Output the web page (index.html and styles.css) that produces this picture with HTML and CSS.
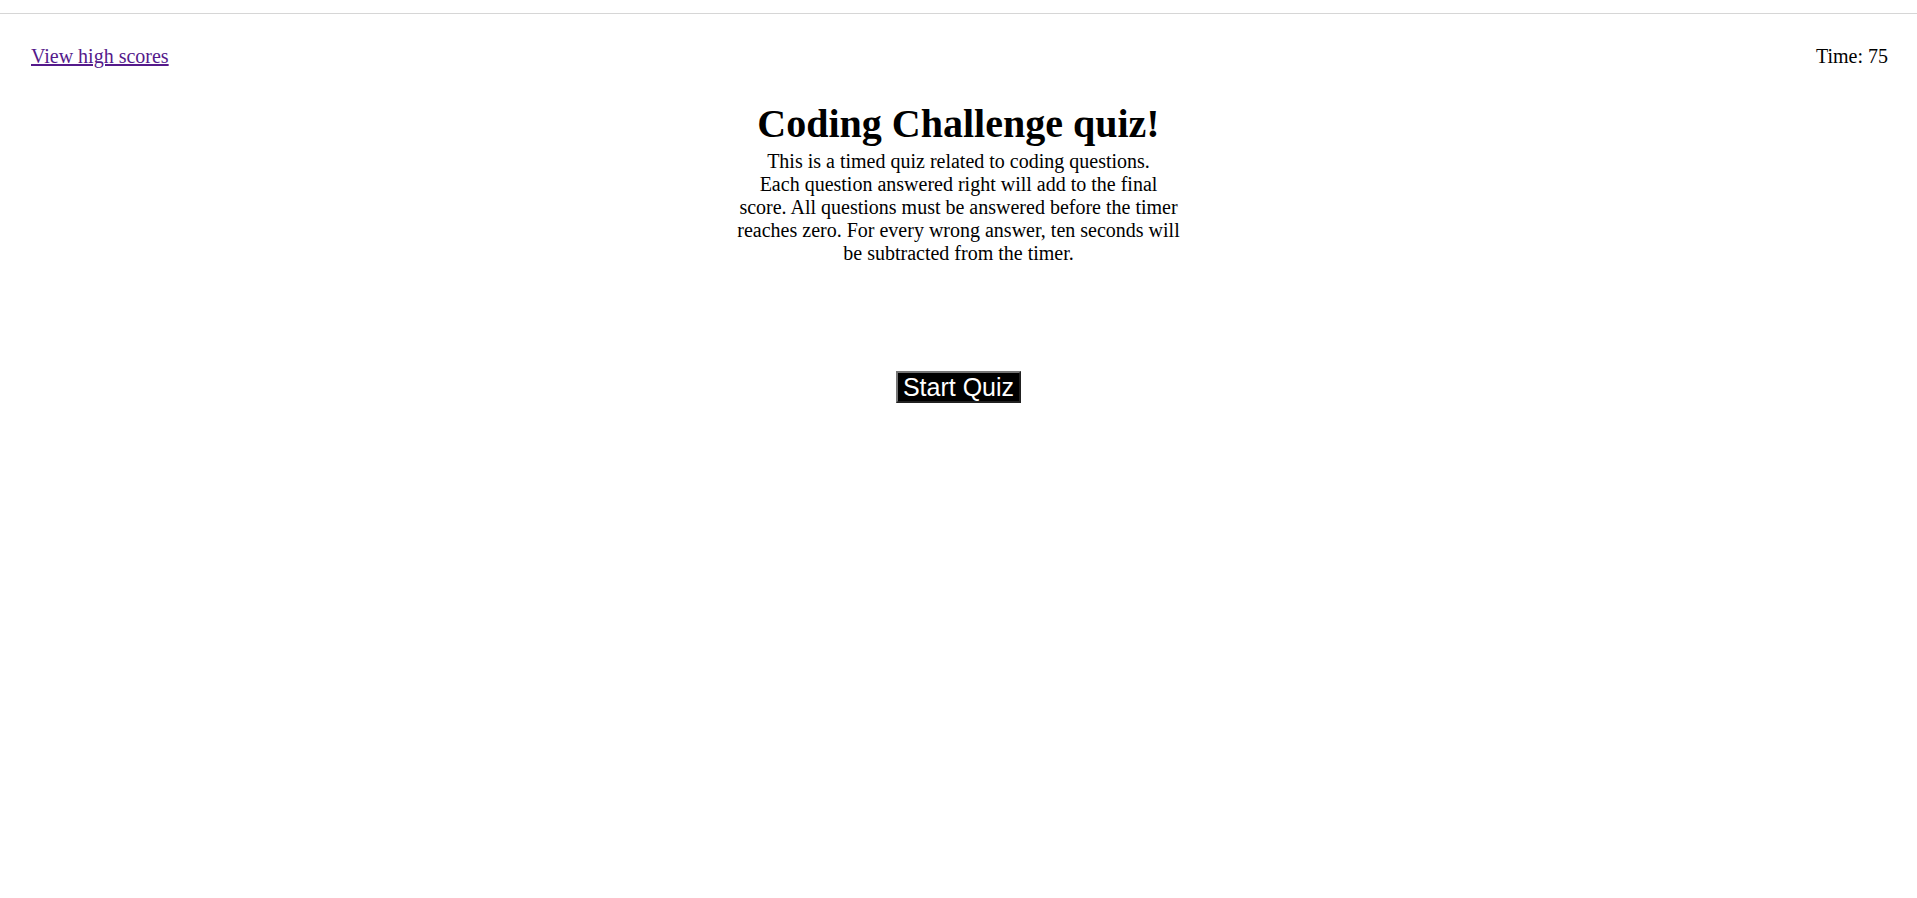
FILE: index.html
```html
<!DOCTYPE html>
<html lang="en">
<head>
<meta charset="utf-8">
<title>Coding Challenge quiz</title>
<link rel="stylesheet" href="styles.css">
</head>
<body>
<div class="topbar"></div>
<header class="header">
  <a class="scores" href="#">View high scores</a>
  <span class="timer">Time: 75</span>
</header>
<main class="intro">
  <h1 class="title">Coding Challenge quiz!</h1>
  <p class="desc">This is a timed quiz related to coding questions.<br>Each question answered right will add to the final score. All questions must be answered before the timer reaches zero. For every wrong answer, ten seconds will be subtracted from the timer.</p>
  <button class="start">Start Quiz</button>
</main>
</body>
</html>
```
FILE: styles.css
```css
html, body {
  margin: 0;
  padding: 0;
  background: #fff;
}
body {
  font-family: "Liberation Serif", "Times New Roman", serif;
  font-size: 20px;
  color: #000;
}
.topbar {
  height: 13px;
  border-bottom: 1px solid #d6d6d6;
}
.header {
  display: flex;
  justify-content: space-between;
  align-items: baseline;
  padding: 31px 29px 0 31px;
}
.scores {
  color: #551a8b;
  text-decoration: underline;
}
.timer {
  color: #000;
}
.intro {
  display: flex;
  flex-direction: column;
  align-items: center;
}
.title {
  font-size: 40px;
  font-weight: bold;
  margin: 33px 0 0;
  line-height: 46px;
}
.desc {
  width: 446px;
  margin: 3px 0 0;
  text-align: center;
  line-height: 23px;
}
.start {
  margin-top: 106px;
  font-family: "Liberation Sans", Arial, sans-serif;
  font-size: 25px;
  background: #000;
  color: #fff;
  border: 2px outset #767676;
  padding: 0 5px;
  line-height: 28px;
}
```
